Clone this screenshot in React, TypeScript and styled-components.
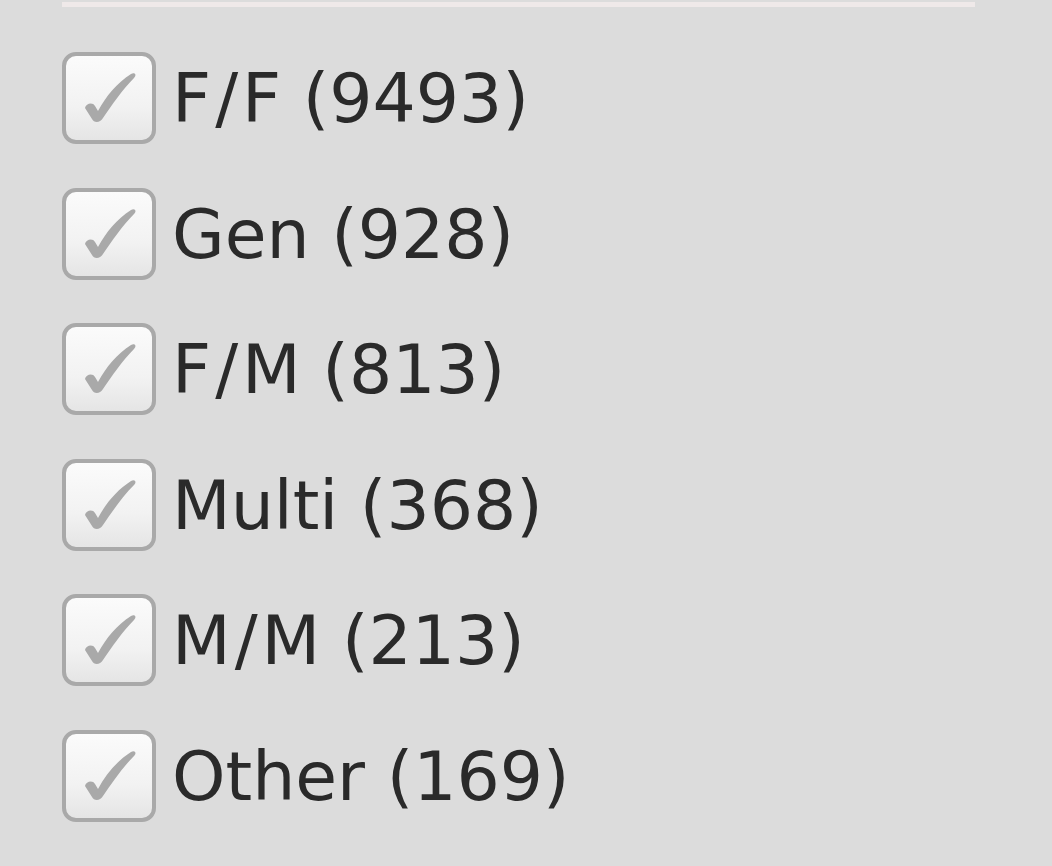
import React from "react";
import styled, { createGlobalStyle } from "styled-components";

const GlobalStyle = createGlobalStyle`
  html, body {
    margin: 0;
    padding: 0;
    background: #dcdcdc;
  }
  body {
    font-family: "DejaVu Sans", Verdana, sans-serif;
  }
`;

const Page = styled.div`
  width: 1052px;
  height: 866px;
  background: #dcdcdc;
  padding: 2px 0 0 62px;
  box-sizing: border-box;
  overflow: hidden;
`;

const Divider = styled.div`
  width: 913px;
  height: 5px;
  background: #efe9e9;
`;

const List = styled.ul`
  list-style: none;
  margin: 45px 0 0;
  padding: 0;
  display: flex;
  flex-direction: column;
  gap: 43.6px;
`;

const Row = styled.li`
  display: flex;
  align-items: center;
  height: 92px;
  cursor: pointer;
`;

const Box = styled.span`
  flex: none;
  width: 94px;
  height: 92px;
  box-sizing: border-box;
  border: 4px solid #a9a9a9;
  border-radius: 14px;
  background: linear-gradient(to bottom, #fbfbfb 0%, #f2f2f2 60%, #e5e5e5 100%);
  display: flex;
`;

const Label = styled.span`
  margin-left: 16px;
  padding-top: 2px;
  font-size: 68px;
  line-height: 1;
  color: #2a2a2a;
  white-space: nowrap;
`;

// the slash in this face is narrow, so give it a bit of room
const Slash = styled.span`
  margin: 0 4px;
`;

const Check = () => (
  <svg width="86" height="84" viewBox="0 0 86 84">
    <path
      d="M19 52 C20 47 27 46 29 50 L32 55 C40 40 51 27 65 18 C69 16 71 19 68 22 C56 34 46 49 37 62 C34 67 28 67 26 63 Z"
      fill="#a9a9a9"
    />
  </svg>
);

const filters = [
  { name: "F/F", count: 9493 },
  { name: "Gen", count: 928 },
  { name: "F/M", count: 813 },
  { name: "Multi", count: 368 },
  { name: "M/M", count: 213 },
  { name: "Other", count: 169 },
];

const renderName = (name: string) => {
  const parts = name.split("/");
  if (parts.length < 2) return name;
  return (
    <>
      {parts[0]}
      <Slash>/</Slash>
      {parts[1]}
    </>
  );
};

export default function App() {
  return (
    <>
      <GlobalStyle />
      <Page>
        <Divider />
        <List>
          {filters.map((f) => (
            <Row key={f.name}>
              <Box>
                <Check />
              </Box>
              <Label>
                {renderName(f.name)} ({f.count})
              </Label>
            </Row>
          ))}
        </List>
      </Page>
    </>
  );
}
